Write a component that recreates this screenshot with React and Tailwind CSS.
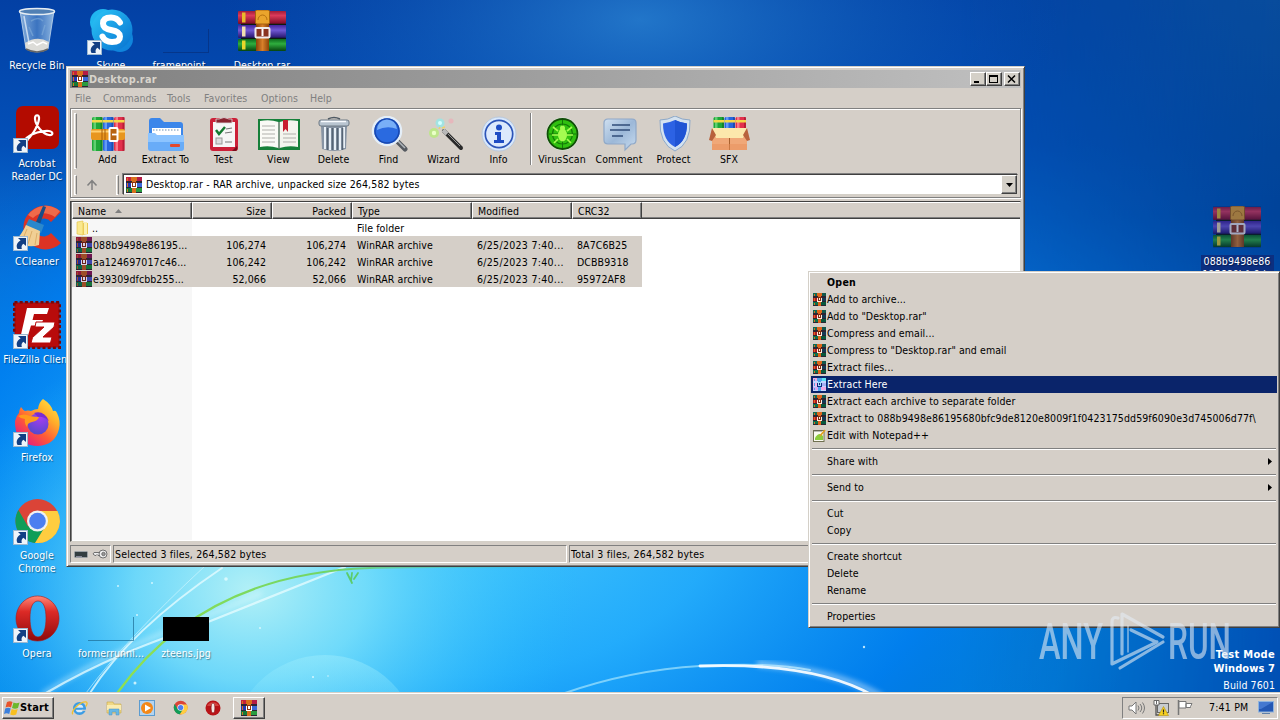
import React from "react";

const UI = "font-['DejaVu_Sans_Condensed','DejaVu_Sans',sans-serif] [font-stretch:condensed] text-[10.5px] leading-[13px] tracking-[.09px] whitespace-nowrap";
const RAISED = "border border-t-white border-l-white border-r-[#404040] border-b-[#404040] shadow-[inset_-1px_-1px_0_#808080]";
const SUNKEN = "border border-t-[#808080] border-l-[#808080] border-r-white border-b-white";

/* ---------- archive icons ---------- */

function Books({ className = "", dim = false }) {
  return (
    <svg viewBox="0 0 48 42" className={className}>
      <defs>
        <linearGradient id="bkR" x1="0" y1="0" x2="0" y2="1"><stop offset="0" stopColor="#a01c38" /><stop offset=".35" stopColor="#dc3a5a" /><stop offset="1" stopColor="#7a0a24" /></linearGradient>
        <linearGradient id="bkP" x1="0" y1="0" x2="0" y2="1"><stop offset="0" stopColor="#43259c" /><stop offset=".4" stopColor="#7058d4" /><stop offset="1" stopColor="#25146b" /></linearGradient>
        <linearGradient id="bkG" x1="0" y1="0" x2="0" y2="1"><stop offset="0" stopColor="#0d6a1c" /><stop offset=".4" stopColor="#2fae3e" /><stop offset="1" stopColor="#07440f" /></linearGradient>
        <linearGradient id="belt" x1="0" y1="0" x2="1" y2="0"><stop offset="0" stopColor="#8a4208" /><stop offset=".5" stopColor="#d8802a" /><stop offset="1" stopColor="#8a4208" /></linearGradient>
      </defs>
      <rect x="0" y="1" width="48" height="13" rx="1" fill="url(#bkR)" />
      <rect x="0" y="15" width="48" height="13" rx="1" fill="url(#bkP)" />
      <rect x="0" y="29" width="48" height="12" rx="1" fill="url(#bkG)" />
      <path d="M3 14.300h45M3 28.300h45" stroke="#0c1c10" strokeWidth="1.200" />
      <rect x="4" y="2.500" width="3.500" height="10" fill="#e8b92a" />
      <rect x="4" y="16.500" width="3.500" height="10" fill="#f0e0b0" />
      <rect x="4" y="30.500" width="3.500" height="9" fill="#e8d72a" />
      <rect x="18" y="1" width="13" height="40" fill="url(#belt)" />
      <rect x="17.500" y="0" width="14" height="14" rx="1.500" fill="#eaa42c" stroke="#a8620e" />
      <path d="M20 10a4.500 5 0 0 1 9 0" fill="none" stroke="#b5700f" />
      <rect x="17.500" y="18" width="14" height="9.500" rx="1" fill="#8a3420" stroke="#f0ecec" strokeWidth="2" />
      <rect x="23.500" y="19" width="2" height="7" fill="#fff" />
      {dim && <rect width="48" height="42" fill="#0a246a" opacity=".34" />}
    </svg>
  );
}

function Rar({ v = "a", className = "" }) {
  const p = {
    a: ["#c4203c", "#b41c46", "#2336b4", "#3a68d8", "#157a38", "#2a9c40", "#d8701c", "#8c3414", "#fff"],
    sel: ["#901838", "#6e1450", "#232c94", "#3c46ac", "#0d6446", "#16733a", "#9c4d28", "#6a2018", "#d8d4e4"],
    menu: ["#0f6a50", "#12584c", "#b01c20", "#143a54", "#0c7048", "#08583c", "#e0661a", "#7c2c14", "#ffe9dc"],
    hot: ["#f0a8d8", "#58e4f0", "#f6b6e4", "#a4b0f4", "#d4a8f0", "#f0a8e4", "#4ba4ec", "#a8dcfa", "#142a80"],
  }[v];
  return (
    <svg viewBox="0 0 16 16" shapeRendering="crispEdges" className={className}>
      <rect width="16" height="16" fill={v === "hot" ? "#c4d4ff" : "#2b2434"} />
      <path d="M0 0h6v4H0z" fill={p[0]} /><path d="M10 0h6v4h-6z" fill={p[1]} />
      <path d="M0 6h6v4H0z" fill={p[2]} /><path d="M10 6h6v4h-6z" fill={p[3]} />
      <path d="M0 11h6v4H0z" fill={p[4]} /><path d="M10 11h6v4h-6z" fill={p[5]} />
      <path d="M1 1h1v3H1zM1 6h1v4H1zM1 12h1v3H1z" fill={p[6]} />
      <path d="M6 0h4v16H6z" fill={p[6]} /><path d="M5 0h6v4H5z" fill={p[6]} /><path d="M5 5h6v6H5z" fill={p[7]} />
      <path d="M5 6h1v4H5zM10 6h1v4h-1zM5 10h6v1H5zM7 6h2v3H7z" fill={p[8]} />
    </svg>
  );
}

/* ---------- desktop icons ---------- */

const Shortcut = () => (
  <svg viewBox="0 0 15 15" className="absolute bottom-0 left-0 size-[15px]">
    <rect x=".5" y=".5" width="14" height="14" fill="#eef4fa" stroke="#9db8d0" />
    <path d="M5 2h8v8l-2.600-2.200C8.600 9 8.200 10.600 8.800 13H4.600C2.800 9.800 3.800 6.600 7.600 4.400z" fill="#123f84" />
  </svg>
);

const RecycleBin = () => (
  <svg viewBox="0 0 48 48" className="size-12">
    <defs><linearGradient id="bin" x1="0" x2="1"><stop offset="0" stopColor="#9cc0e4" stopOpacity=".85" /><stop offset=".5" stopColor="#4e84c8" stopOpacity=".75" /><stop offset="1" stopColor="#a8cbea" stopOpacity=".85" /></linearGradient></defs>
    <path d="M7 4l6 38q11 6 22 0l6-38z" fill="url(#bin)" stroke="#c3d8ec" strokeWidth=".8" />
    <path d="M12 36q12-8 24-1l-1 7q-11 6-22 0z" fill="#dcdcd8" />
    <path d="M13 42q11 6 22 0" stroke="#666" strokeWidth="1.500" fill="none" />
    <path d="M15 37l5-2 4 3 6-3 4 2" stroke="#fff" strokeWidth="1.500" fill="none" />
    <path d="M18 14q8-5 12 0M16 20l4 9M32 18l-3 10" stroke="#82add8" strokeWidth="1.500" fill="none" opacity=".6" />
    <ellipse cx="24" cy="4.500" rx="17.500" ry="3" fill="#5180b4" stroke="#e6edf2" strokeWidth="1.500" />
    <path d="M11 9l5 27" stroke="#eef5fc" strokeWidth="1.500" opacity=".7" />
  </svg>
);

const Skype = () => (
  <svg viewBox="0 0 48 48" className="size-12">
    <defs><linearGradient id="sky" x1="0" y1="0" x2="1" y2="1"><stop stopColor="#2cc8f8" /><stop offset="1" stopColor="#0870cf" /></linearGradient></defs>
    <circle cx="16" cy="15" r="13" fill="#21b6f0" /><circle cx="33" cy="32" r="13" fill="#1085dc" />
    <circle cx="25" cy="23" r="20.500" fill="url(#sky)" />
    <path d="M33 15.500q-3-5-9-5-8 0-8 6 0 5 8 6.500 9 1.500 9 6.500 0 5.500-8 5.500-7 0-9.500-5.500" fill="none" stroke="#fff" strokeWidth="6" strokeLinecap="round" />
  </svg>
);

const Acrobat = () => (
  <svg viewBox="0 0 48 48" className="size-12">
    <rect x="3" y="1" width="43" height="43" rx="7" fill="#b30b00" />
    <path d="M13 36C18 32 25 22 26 14c.6-5-4.400-5-4 0 .6 7 8 15 14 16 4.500.7 4.500-3.500 0-4-7-.6-17 2.500-22 6.500-4 3.400-3 6 1 2z" fill="none" stroke="#fff" strokeWidth="2.200" />
  </svg>
);

const CCleaner = () => (
  <svg viewBox="0 0 48 48" className="size-12">
    <path d="M48 9A22 22 0 1 0 48 40L38 30a9 9 0 1 1 0-11z" fill="#dd3324" />
    <path d="M47 8A22 22 0 0 0 15 12l5 3q9-9 22-1z" fill="#ef6a4a" />
    <path d="M30 3l3 1-6 17-4-2z" fill="#164e88" />
    <path d="M16 16l15 6-3 8-16-6z" fill="#2b88cc" />
    <path d="M13 22l14 6-1 14q-12 4-24-4 7-7 11-16z" fill="#f1cf94" />
    <path d="M14 26l-5 12M19 28l-4 13M24 30l-2 12" stroke="#dcae68" strokeWidth="1" />
  </svg>
);

const FileZilla = () => (
  <svg viewBox="0 0 48 48" className="size-12">
    <rect x="1.500" y="1.500" width="45" height="45" fill="#b50a0a" stroke="#780606" strokeWidth="3" strokeDasharray="3 2.200" />
    <rect x="2.500" y="2.500" width="43" height="43" fill="#b80b0b" />
    <path d="M14 7h22l-2 6H21l-1.500 6H30l-2 5.500H18L14 38H7z" fill="#fff" />
    <path d="M23 21h19l-1 5-11 10h9l-1.500 6H18l1.500-5.500L31 26h-9z" fill="#fff" stroke="#b80b0b" strokeWidth="1" />
  </svg>
);

const Firefox = () => (
  <svg viewBox="0 0 48 48" className="size-12">
    <defs>
      <linearGradient id="fx" x1="1" y1="0" x2=".2" y2="1"><stop stopColor="#fff04a" /><stop offset=".35" stopColor="#ffb02a" /><stop offset=".65" stopColor="#ff5a36" /><stop offset="1" stopColor="#e31587" /></linearGradient>
      <radialGradient id="fxb" cx=".6" cy=".2" r=".9"><stop stopColor="#a63cf0" /><stop offset="1" stopColor="#4b4bc8" /></radialGradient>
    </defs>
    <path d="M30 0q8 5 10 12 3-1 4 2 4 8 2 16-4 16-21 17Q8 47 3 32 0 20 6 14q0-3 2-6 2 3 4 4 3-1 6 0 4-2 7-2 1-7 5-10z" fill="url(#fx)" />
    <circle cx="25" cy="25" r="10.500" fill="url(#fxb)" />
    <path d="M5 17q6-3 12 0 5 1 9 1-1 4-7 5-5 1-5 5-3-4-2-8-4 0-7-3z" fill="#ff9a1c" />
    <path d="M21 14q10-3 15 8-6-5-11-4z" fill="#7a2cd0" />
  </svg>
);

function Chrome({ className = "size-12" }) {
  return (
    <svg viewBox="0 0 48 48" className={className}>
      <circle cx="24.500" cy="24" r="22" fill="#db4437" />
      <path d="M5.400 13A22 22 0 0 0 22 45.900L34 29.500 24.500 24 15 29.500z" fill="#0f9d58" />
      <path d="M24.500 14H44.500A22 22 0 0 1 22 45.900L33 28z" fill="#ffcd40" />
      <circle cx="24.500" cy="24" r="10.500" fill="#f1f1f1" /><circle cx="24.500" cy="24" r="8.300" fill="#4c7ef0" />
    </svg>
  );
}

function Opera({ className = "size-12" }) {
  return (
    <svg viewBox="0 0 48 48" className={className}>
      <defs><linearGradient id="op" x1="0" y1="0" x2="0" y2="1"><stop stopColor="#ff8878" /><stop offset=".35" stopColor="#dc2a26" /><stop offset="1" stopColor="#8e0a0c" /></linearGradient></defs>
      <path fillRule="evenodd" d="M24.500 1a21.500 22.500 0 1 0 .01 0zM25 6c6 0 8 8 8 17s-2 19-8 19-8-10-8-19 2-17 8-17z" fill="url(#op)" stroke="#a81818" strokeWidth=".6" />
    </svg>
  );
}

function DeskIcon({ pos, label, shortcut = true, labelClass = "", children }) {
  return (
    <div className={`absolute flex w-[74px] flex-col items-center ${pos}`}>
      <div className="relative flex size-12 items-center justify-center">
        {children}
        {shortcut && <Shortcut />}
      </div>
      <div className={`mt-1 text-center text-white [text-shadow:1px_1px_1px_#0006] ${UI} ${labelClass}`}>
        {label.map((l) => <div key={l}>{l}</div>)}
      </div>
    </div>
  );
}

function Wallpaper() {
  return (
    <svg viewBox="0 0 1280 720" className="absolute inset-0 h-[720px] w-[1280px]">
      <defs>
        <linearGradient id="wl" x1="0" y1="0" x2="0" y2="1">
          <stop offset="0" stopColor="#0340a4" /><stop offset=".2" stopColor="#0350b8" /><stop offset=".38" stopColor="#0876dc" />
          <stop offset=".55" stopColor="#0496f0" /><stop offset=".8" stopColor="#08aaf6" /><stop offset="1" stopColor="#029cf4" />
        </linearGradient>
        <linearGradient id="wr" x1="0" y1="0" x2="0" y2="1">
          <stop offset="0" stopColor="#0c4c94" /><stop offset=".3" stopColor="#003f90" /><stop offset=".6" stopColor="#0058c0" /><stop offset="1" stopColor="#0050b4" />
        </linearGradient>
        <linearGradient id="mk"><stop offset=".75" stopColor="#000" /><stop offset="1" stopColor="#fff" /></linearGradient>
        <mask id="rm"><rect width="1280" height="720" fill="url(#mk)" /></mask>
        <radialGradient id="g1" gradientUnits="userSpaceOnUse" cx="0" cy="0" r="1" gradientTransform="translate(460 500) scale(660 440)">
          <stop offset="0" stopColor="#48c8fc" /><stop offset=".4" stopColor="#24acfc" stopOpacity=".95" /><stop offset=".75" stopColor="#007cf0" stopOpacity=".8" /><stop offset="1" stopColor="#0060cc" stopOpacity="0" />
        </radialGradient>
        <radialGradient id="g2" gradientUnits="userSpaceOnUse" cx="0" cy="0" r="1" gradientTransform="translate(250 590) scale(330 260)">
          <stop offset="0" stopColor="#b2f0f6" /><stop offset=".35" stopColor="#7ce2fa" stopOpacity=".85" /><stop offset="1" stopColor="#20c0fc" stopOpacity="0" />
        </radialGradient>
        <radialGradient id="g3" gradientUnits="userSpaceOnUse" cx="0" cy="0" r="1" gradientTransform="translate(640 20) scale(420 200)">
          <stop offset="0" stopColor="#2c86d4" stopOpacity=".75" /><stop offset="1" stopColor="#0c58b8" stopOpacity="0" />
        </radialGradient>
        <linearGradient id="orb" x1="0" y1="0" x2="0" y2="1"><stop stopColor="#9cecfc" stopOpacity=".5" /><stop offset=".5" stopColor="#5cd8fc" stopOpacity=".1" /></linearGradient>
        <linearGradient id="grn"><stop stopColor="#90e050" /><stop offset=".5" stopColor="#70d468" /><stop offset="1" stopColor="#40b8c8" stopOpacity="0" /></linearGradient>
        <filter id="soft"><feGaussianBlur stdDeviation="2.500" /></filter>
      </defs>
      <rect width="1280" height="720" fill="url(#wl)" />
      <rect width="1280" height="720" fill="url(#wr)" mask="url(#rm)" />
      <rect x="640" width="640" height="720" fill="#004cb0" opacity=".3" />
      <rect width="1280" height="720" fill="url(#g3)" />
      <rect width="1280" height="720" fill="url(#g1)" />
      <rect width="1280" height="720" fill="url(#g2)" />
      <circle cx="325" cy="749" r="94" fill="url(#orb)" />
      <g fill="none" strokeLinecap="round">
        <path d="M44 693C120 645 180 628 260 594" stroke="#dffaff" strokeWidth="5" opacity=".4" filter="url(#soft)" />
        <path d="M46 693C110 655 170 636 208 622T345 567" stroke="#e8fcff" strokeWidth="2.200" opacity=".75" />
        <path d="M90 693Q130 630 222 568" stroke="#e4fbff" strokeWidth="2" opacity=".8" />
        <path d="M86 693Q125 640 205 566" stroke="#d8f8ff" strokeWidth="1" opacity=".6" />
        <path d="M118 692C170 620 250 572 370 568Q420 566 560 568" stroke="url(#grn)" strokeWidth="2.200" />
        <path d="M347 573l5 10M352 573l-1 8M358 573l-4 6" stroke="#5ccc6c" strokeWidth="1.800" />
        <path d="M562 694Q630 670 700 666T810 670" stroke="#9ce0fc" strokeWidth="2" opacity=".75" />
        <path d="M760 664Q840 672 880 696" stroke="#fff" strokeWidth="7" opacity=".4" filter="url(#soft)" />
        <path d="M700 666Q815 662 874 696" stroke="#fff" strokeWidth="2.800" opacity=".9" />
      </g>
      <g fill="#e8fdff" opacity=".8">
        <circle cx="226" cy="579" r="1.800" /><circle cx="118" cy="586" r="1" /><circle cx="152" cy="583" r="1" /><circle cx="137" cy="615" r="1" /><circle cx="135" cy="683" r="1.500" />
        <circle cx="313" cy="677" r="1" /><circle cx="328" cy="676" r=".8" /><circle cx="260" cy="628" r="1" /><circle cx="864" cy="647" r="1.200" />
      </g>
    </svg>
  );
}

/* ---------- toolbar icons ---------- */

const TI = "h-[36px] w-[42px]";
const BookCols = ({ h = 34, y = 1 }) => (
  <g>
    {[["#1fa838", "#7ce08a", "#0e6e20"], ["#2766dc", "#7fb2ff", "#123c98"], ["#e2304c", "#ff9aa4", "#a01028"]].map(([c, l, d], i) => (
      <g key={c}>
        <rect x={5 + i * 11} y={y} width="10.500" height={h} rx="1.500" fill={c} />
        <rect x={6.500 + i * 11} y={y} width="2.500" height={h} fill={l} opacity=".7" />
        <rect x={13.500 + i * 11} y={y} width="2" height={h} fill={d} opacity=".6" />
        <rect x={5 + i * 11} y={y + 3} width="10.500" height="2.500" fill="#f4d848" />
      </g>
    ))}
  </g>
);

const icons = {
  Add: (
    <svg viewBox="0 0 42 36" className={TI}>
      <BookCols />
      <rect x="4" y="13" width="34" height="11" rx="2" fill="#e8961e" />
      <path d="M4 15.500h34" stroke="#ffd070" strokeWidth="2" /><path d="M15 13v11M18 13v11" stroke="#a85c08" />
      <rect x="22.500" y="12" width="8" height="13" rx="1" fill="#b86410" stroke="#fff" strokeWidth="2" />
      <path d="M25 18.500h6" stroke="#fff" strokeWidth="1.800" />
    </svg>
  ),
  "Extract To": (
    <svg viewBox="0 0 42 36" className={TI}>
      <path d="M4 5q0-3 3-3h8l4 4h16q3 0 3 3v18H4z" fill="#3b86ea" />
      <path d="M7 12h29v9H7z" fill="#fff" /><path d="M8 14h27" stroke="#9ab4cc" strokeWidth="1.500" strokeDasharray="1.500 1.500" />
      <path d="M3 17h7l2 2h27v13q0 3-3 3H6q-3 0-3-3z" fill="#8cc4ff" /><path d="M3 26h36v6q0 3-3 3H6q-3 0-3-3z" fill="#68acf8" />
      <rect x="25" y="28" width="10" height="3" rx="1" fill="#e4482c" />
    </svg>
  ),
  Test: (
    <svg viewBox="0 0 42 36" className={TI}>
      <rect x="7" y="2" width="28" height="33" rx="3" fill="#cc2038" /><rect x="10" y="6" width="22" height="25" fill="#f6f6f6" />
      <path d="M13 7V3h3q5-3 10 0h3v4z" fill="#8a2430" stroke="#e0e0e0" strokeWidth=".8" />
      <path d="M13 14l3 4 6-7" fill="none" stroke="#147a30" strokeWidth="2.500" />
      <path d="M23 13l6-1M22 17l7-1M22 26h7" stroke="#777" strokeWidth="1.200" /><rect x="13" y="22" width="6" height="6" fill="#ddd" stroke="#999" />
      <path d="M34 30l-5 5h4q2-1 1-5z" fill="#7c0c1c" />
    </svg>
  ),
  View: (
    <svg viewBox="0 0 42 36" className={TI}>
      <path d="M0 3h42v31H0z" fill="#16803a" /><path d="M2 5q10-2 18.500 1v26Q11 29 2 31z" fill="#fafaf6" /><path d="M40 5q-10-2-18.500 1v26q9.500-3 18.500-1z" fill="#f4f4ee" />
      <path d="M20.500 6h1v27h-1z" fill="#777" />
      <path d="M4 10h13M4 14h13M4 18h13M4 22h13M4 26h13M25 18h13M25 22h13M25 26h13" stroke="#b0b0ac" />
      <path d="M25 4h5v12l-2.500-3-2.500 3z" fill="#c81c30" />
    </svg>
  ),
  Delete: (
    <svg viewBox="0 0 42 36" className={TI}>
      <path d="M8 10h26l-1 23q-12 4-24 0z" fill="#8794a4" />
      <path d="M12 11v22M17 12v22M22 12v22M27 12v22M31 11v21" stroke="#e8eff6" strokeWidth="2" /><path d="M14.500 12v22M19.500 12v22M24.500 12v22M29.500 12v22" stroke="#566474" strokeWidth="1.500" />
      <rect x="6" y="4" width="30" height="6" rx="2" fill="#b8c4d0" stroke="#6c7884" /><path d="M15 3q6-3 12 0" fill="none" stroke="#505a64" strokeWidth="1.500" />
      <path d="M8 5.500h25" stroke="#f8fbff" strokeWidth="1.500" />
    </svg>
  ),
  Find: (
    <svg viewBox="0 0 42 36" className={TI}>
      <path d="M27 23l10 10" stroke="#555a60" strokeWidth="5" strokeLinecap="round" /><path d="M28 23l9 9" stroke="#b0b6bc" strokeWidth="1.500" />
      <circle cx="19" cy="15" r="14" fill="#2a6ae0" stroke="#e4eef8" strokeWidth="2.500" /><circle cx="19" cy="15" r="12" fill="none" stroke="#1848b0" strokeWidth="1.500" />
      <path d="M9 14a10 10 0 0 1 20-1q-10-4-20 1z" fill="#8cc0fc" opacity=".8" />
    </svg>
  ),
  Wizard: (
    <svg viewBox="0 0 42 36" className={TI}>
      <path d="M21 15l17 17" stroke="#2a2a2a" strokeWidth="4" strokeLinecap="round" /><path d="M20 14l4 4" stroke="#b8b8b8" strokeWidth="4" /><path d="M25 18l12 12" stroke="#999" strokeWidth="1" />
      <circle cx="17" cy="7" r="4.500" fill="#80f0f4" opacity=".6" /><circle cx="17" cy="7" r="2" fill="#d4ffff" />
      <circle cx="11" cy="17" r="5" fill="#b4f070" opacity=".7" /><circle cx="11" cy="17" r="2.200" fill="#eaffc8" />
      <circle cx="28" cy="5" r="2.500" fill="#f8a0b0" opacity=".5" /><path d="M19 12l3-1M16 13l1-2" stroke="#ecd46c" strokeWidth="1.500" />
    </svg>
  ),
  Info: (
    <svg viewBox="0 0 42 36" className={TI}>
      <circle cx="21" cy="18" r="17" fill="#d8e8fc" stroke="#b8c8dc" /><circle cx="21" cy="18" r="13.700" fill="#dce9fc" stroke="#2c54b8" strokeWidth="1.700" />
      <circle cx="21" cy="11.500" r="3" fill="#1e4cc4" /><path d="M17 16h6v8h3v3H16v-3h3v-5h-2z" fill="#1e4cc4" />
    </svg>
  ),
  VirusScan: (
    <svg viewBox="0 0 42 36" className={TI}>
      <circle cx="21.500" cy="18" r="16.500" fill="#dce4d8" /><circle cx="21.500" cy="18" r="15" fill="#30c010" stroke="#124e08" strokeWidth="1.800" />
      <circle cx="21.500" cy="18" r="10" fill="none" stroke="#147808" strokeWidth="1.200" /><path d="M21.500 4v28M7.500 18h28" stroke="#147808" />
      <ellipse cx="21.500" cy="19" rx="4.500" ry="6.500" fill="#a4fc50" /><circle cx="21.500" cy="12" r="2.500" fill="#a4fc50" />
      <path d="M17 15l-5-4M26 15l5-4M17 19h-6M26 19h6M17 23l-4 4M26 23l4 4" stroke="#a4fc50" strokeWidth="1.700" />
    </svg>
  ),
  Comment: (
    <svg viewBox="0 0 42 36" className={TI}>
      <defs><linearGradient id="cm" x1="0" y1="0" x2="1" y2="1"><stop stopColor="#d0e0f0" /><stop offset=".5" stopColor="#9cb8d8" /><stop offset="1" stopColor="#c8dcf0" /></linearGradient></defs>
      <path d="M10 3h24q4 0 4 4v17q0 4-4 4h-1l-6 6v-6H10q-4 0-4-4V7q0-4 4-4z" fill="url(#cm)" stroke="#8fa8c8" strokeWidth="1.200" />
      <path d="M14 9h18M12 14h20M14 20h11" stroke="#304c78" strokeWidth="1.500" />
    </svg>
  ),
  Protect: (
    <svg viewBox="0 0 42 36" className={TI}>
      <path d="M22 0q7 4 15 4 1 24-15 31Q6 28 7 4q8 0 15-4z" fill="#d4e2f0" stroke="#8ca8c8" />
      <path d="M22 4q6 3 12 3.500Q34 25 22 31 10 25 10 7.500 16 7 22 4z" fill="#2c62e4" /><path d="M22 4q6 3 12 3.500Q34 25 22 31z" fill="#1f54d4" />
    </svg>
  ),
  SFX: (
    <svg viewBox="0 0 42 36" className={TI}>
      <g transform="translate(.5 0)"><BookCols h={16} y={1} /></g>
      <path d="M4 14h35v20H4z" fill="#f0a878" /><path d="M21 20h1v14h-1z" fill="#a8602c" /><path d="M4 28h35v6H4z" fill="#e8905c" opacity=".5" />
      <path d="M4 12h35l-4 10H8z" fill="#fce8ac" /><path d="M4 12L1 24l3 1 4-6zM39 12l3 12-3 1-4-6z" fill="#b8623c" />
    </svg>
  ),
};

const tools = [
  ["Add", "w-[55px]"], ["Extract To", "w-[61px]"], ["Test", "w-[55px]"], ["View", "w-[55px]"], ["Delete", "w-[55px]"], ["Find", "w-[55px]"],
  ["Wizard", "w-[55px]"], ["Info", "w-[55px]"], null, ["VirusScan", "w-[60px]"], ["Comment", "w-[54px]"], ["Protect", "w-[55px]"], ["SFX", "w-[56px]"],
];

/* ---------- WinRAR window ---------- */

const Grip = ({ className = "" }) => <div className={`w-[3px] shrink-0 border-y border-l border-r border-y-white border-l-white border-r-[#808080] ${className}`} />;

function TitleButton({ children, className = "" }) {
  return (
    <div className={`flex h-[14px] w-4 items-center justify-center bg-[#d4d0c8] ${RAISED} ${className}`}>
      <svg viewBox="0 0 12 10" className="h-[10px] w-3" shapeRendering="crispEdges" fill="none" stroke="#000">{children}</svg>
    </div>
  );
}

const cols = [
  ["Name", "w-[120px] pl-[5px]"], ["Size", "w-20 justify-end pr-[5px]"], ["Packed", "w-20 justify-end pr-[5px]"],
  ["Type", "w-[120px] pl-[5px]"], ["Modified", "w-[100px] pl-[5px]"], ["CRC32", "w-[70px] pl-[5px]"],
];
const files = [
  ["088b9498e86195...", "106,274", "106,274", "8A7C6B25"],
  ["aa124697017c46...", "106,242", "106,242", "DCBB9318"],
  ["e39309dfcbb255...", "52,066", "52,066", "95972AF8"],
];

function WinRar() {
  return (
    <div className="absolute top-[66px] left-[66px] flex h-[501px] w-[959px] flex-col border border-t-[#d4d0c8] border-l-[#d4d0c8] border-r-[#404040] border-b-[#404040] bg-[#d5cfc8] p-[3px] shadow-[inset_1px_1px_0_#fff,inset_-1px_-1px_0_#808080]">
      <div className="flex h-[18px] items-center bg-linear-to-r from-[#808080] to-[#c0c0c0] pr-px pl-[2px]">
        <Rar className="size-4" />
        <span className={`ml-px flex-1 font-bold text-[#d8d4cc] ${UI} text-[10.8px]! tracking-[.25px]!`}>Desktop.rar</span>
        <TitleButton><path d="M2 7h5M2 8h5" /></TitleButton>
        <TitleButton><path d="M1.500 1.500h8v7h-8zM1 2.500h9" /></TitleButton>
        <TitleButton className="ml-[2px]"><path d="M2 1.500l7 7M9 1.500l-7 7" strokeWidth="1.500" shapeRendering="auto" /></TitleButton>
      </div>
      <div className={`flex h-5 items-center text-[#808080] ${UI}`}>
        <span className="w-[28px] pl-[5px]">File</span><span className="ml-[5px] w-16 tracking-normal">Commands</span><span className="w-[37px]">Tools</span>
        <span className="w-[57px]">Favorites</span><span className="w-[49px]">Options</span><span>Help</span>
      </div>

      <div className="flex h-[90px] flex-col border border-[#808080] shadow-[inset_1px_1px_0_#fff,1px_1px_0_#fff]">
        <div className="flex h-[63px] pt-[4px] pl-[3px]">
          <Grip className="mr-[3px] h-[56px]" />
          {tools.map((t, i) =>
            t ? (
              <div key={t[0]} className={`flex shrink-0 flex-col items-center pt-[3px] ${t[1]}`}>
                {icons[t[0]]}
                <span className={`mt-px ${UI}`}>{t[0]}</span>
              </div>
            ) : (
              <div key={i} className="mr-px ml-[4px] h-[52px] w-px shrink-0 bg-[#808080] shadow-[1px_0_0_#fff]" />
            )
          )}
        </div>
        <div className="flex h-[24px] items-center pt-px pr-[2px] pl-[3px]">
          <Grip className="h-[20px]" />
          <svg viewBox="0 0 12 12" className="ml-[9px] size-3" fill="none" stroke="#808080" strokeWidth="1.500"><path d="M6 11V2M1.500 6.500L6 1.700l4.500 4.800" /></svg>
          <Grip className="ml-[18px] h-[20px]" />
          <div className="ml-[4px] flex h-[21px] flex-1 items-center border border-t-[#404040] border-l-[#404040] border-r-[#d4d0c8] border-b-[#d4d0c8] bg-white pl-[2px] shadow-[-1px_-1px_0_#808080]">
            <Rar className="size-4" />
            <span className={`ml-[4px] flex-1 ${UI} tracking-[.14px]!`}>Desktop.rar - RAR archive, unpacked size 264,582 bytes</span>
            <div className={`flex h-[19px] w-4 items-center justify-center bg-[#d4d0c8] ${RAISED}`}>
              <svg viewBox="0 0 7 4" className="h-1 w-[7px]"><path d="M0 0h7L3.500 4z" /></svg>
            </div>
          </div>
        </div>
      </div>

      <div className="mt-[3px] flex h-[341px] flex-col border border-t-[#404040] border-l-[#404040] border-r-[#d4d0c8] border-b-[#d4d0c8] bg-[linear-gradient(90deg,#f7f7f7_121px,#fff_121px)] pl-px shadow-[inset_1px_0_0_#808080,inset_-1px_-1px_0_#fff]">
        <div className={`flex h-[17px] shrink-0 bg-[#d5cfc8] ${UI}`}>
          {cols.map(([c, k]) => (
            <div key={c} className={`flex shrink-0 items-center pt-px ${RAISED} ${k}`}>
              {c}
              {c === "Name" && <svg viewBox="0 0 7 4" className="ml-[9px] h-1 w-[7px]"><path d="M3.500 0L7 4H0z" fill="#808080" /></svg>}
            </div>
          ))}
          <div className="flex-1 border-y border-t-white border-b-[#404040] shadow-[inset_0_-1px_0_#808080]" />
        </div>
        <div className={`flex h-[17px] shrink-0 items-center pt-px ${UI}`}>
          <div className="flex w-[120px] items-center pl-[3px]">
            <svg viewBox="0 0 16 16" className="mr-px size-4"><path d="M2 2l6-1v14l-6-1z" fill="#fae88c" stroke="#e0c040" strokeWidth=".6" /><path d="M8 3h5v11l-5 1z" fill="#eccb58" /><path d="M9 2h3v12H9z" fill="#fbf0b0" /></svg>
            ..
          </div>
          <div className="w-40" /><div className="pl-[5px]">File folder</div>
        </div>
        {files.map(([n, s, p, crc]) => (
          <div key={n} className={`flex h-[17px] w-[570px] shrink-0 items-center bg-[#d5cfc8] pt-px ${UI}`}>
            <div className="flex w-[120px] items-center pl-1"><Rar v="sel" className="mr-px size-4" />{n}</div>
            <div className="w-20 pr-[6px] text-right">{s}</div>
            <div className="w-20 pr-[6px] text-right">{p}</div>
            <div className="w-[120px] pl-[5px]">WinRAR archive</div>
            <div className="w-[100px] pl-[5px] tracking-[.3px]">6/25/2023 7:40...</div>
            <div className="w-[70px] pl-[5px]">{crc}</div>
          </div>
        ))}
      </div>

      <div className={`mt-[3px] flex h-[18px] shrink-0 gap-[2px] ${UI}`}>
        <div className={`flex w-[41px] items-center gap-1 pl-[3px] ${SUNKEN}`}>
          <svg viewBox="0 0 14 7" className="h-[7px] w-[14px]"><rect x=".5" y=".5" width="13" height="6" rx="1" fill="#333d40" stroke="#9aa0a4" /><path d="M2 5.500h6" stroke="#889" /></svg>
          <svg viewBox="0 0 16 10" className="h-[10px] w-4" fill="none" stroke="#707070"><path d="M10 3.500H2l-1 1.500 2 1.500h1l1-1 1 1h4z" fill="#eee" /><circle cx="11" cy="5" r="4" fill="#eee" /><circle cx="11.500" cy="5" r="1.700" fill="#999" /></svg>
        </div>
        <div className={`flex w-[454px] items-center pl-px ${SUNKEN}`}><span className="tracking-[.16px]">Selected 3 files, 264,582 bytes</span></div>
        <div className={`flex flex-1 items-center pl-px ${SUNKEN}`}><span className="tracking-[.22px]">Total 3 files, 264,582 bytes</span></div>
      </div>
    </div>
  );
}

/* ---------- context menu ---------- */

const menu = [
  ["Open", "bold"], ["Add to archive...", "rar"], ['Add to "Desktop.rar"', "rar"], ["Compress and email...", "rar"],
  ['Compress to "Desktop.rar" and email', "rar"], ["Extract files...", "rar"], ["Extract Here", "hot"], ["Extract each archive to separate folder", "rar"],
  ["Extract to 088b9498e86195680bfc9de8120e8009f1f0423175dd59f6090e3d745006d77f\\", "rar"], ["Edit with Notepad++", "npp"], null,
  ["Share with", "sub"], null, ["Send to", "sub"], null, ["Cut"], ["Copy"], null, ["Create shortcut"], ["Delete"], ["Rename"], null, ["Properties"],
];

function ContextMenu() {
  return (
    <div className={`absolute top-[271px] left-[808px] flex w-[472px] flex-col border border-t-[#d4d0c8] border-l-[#d4d0c8] border-r-[#404040] border-b-[#404040] bg-[#d5cfc8] p-[2px] shadow-[inset_1px_1px_0_#fff,inset_-1px_-1px_0_#808080] ${UI}`}>
      {menu.map((m, i) =>
        m ? (
          <div key={m[0]} className={`flex h-[17px] items-center pr-[5px] pl-[2px] ${m[1] === "hot" ? "bg-[#0a246a] text-white" : ""} ${m[1] === "bold" ? "font-bold tracking-[.3px]" : ""}`}>
            <div className="mr-px w-[13px]">
              {m[1] === "rar" && <Rar v="menu" className="size-[13px]" />}
              {m[1] === "hot" && <Rar v="hot" className="size-[13px]" />}
              {m[1] === "npp" && (
                <svg viewBox="0 0 13 13" className="size-[13px]"><rect x=".5" y="1.500" width="10.500" height="11" fill="#fafaf0" stroke="#707050" /><path d="M2 9q4-7 8-2v4H2z" fill="#8ccc3c" /><path d="M7 7l5-6" stroke="#e0a020" strokeWidth="1.800" /><path d="M2 1v2M4 1v2M6 1v2M8 1v2" stroke="#555" strokeWidth=".8" /></svg>
              )}
            </div>
            <span className="flex-1">{m[0]}</span>
            {m[1] === "sub" && <svg viewBox="0 0 4 7" className="h-[7px] w-1"><path d="M0 0l4 3.500L0 7z" /></svg>}
          </div>
        ) : (
          <div key={i} className="flex h-[9px] items-center px-px"><div className="h-[2px] w-full border-t border-b border-t-[#808080] border-b-white" /></div>
        )
      )}
    </div>
  );
}

/* ---------- taskbar ---------- */

function Taskbar() {
  return (
    <div className={`absolute top-[692px] left-0 flex h-7 w-[1280px] items-center border-t border-[#d4d0c8] bg-[#d5cfc8] pt-[2px] pr-[2px] pl-[2px] shadow-[inset_0_1px_0_#fff] ${UI}`}>
      <div className={`flex h-[22px] w-[52px] items-center pl-px ${RAISED}`}>
        <svg viewBox="0 0 16 16" className="size-4">
          <path d="M3 2q3-1.500 5.500 0L7 7.500Q4.500 6 1.500 7.500z" fill="#e8542c" /><path d="M9.500 2.500q3 1.500 6 0L14 8q-3 1.500-6 0z" fill="#6cb82c" />
          <path d="M1.200 8.500q3-1.500 5.500 0L5.200 14Q2.500 12.500 0 14z" fill="#3c80dc" /><path d="M7.700 9q3 1.500 6 0l-1.500 5.500q-3 1.500-6 0z" fill="#f8c020" />
        </svg>
        <span className="text-[11px] font-bold tracking-[.15px]">Start</span>
      </div>
      <div className="ml-[17px] flex items-center gap-[17.500px]">
        <svg viewBox="0 0 18 16" className="h-4 w-[17px]"><circle cx="9" cy="8.500" r="5.500" fill="#d8ecfa" stroke="#3c9ce4" strokeWidth="2.800" /><path d="M4 8.800h11" stroke="#3c9ce4" strokeWidth="2.200" /><path d="M11.500 11h5v-1.200h-5z" fill="#d5cfc8" /><path d="M2 14.500C-1 12 9 1 16 1.500c2 .5.500 4-.5 5" fill="none" stroke="#f0c030" strokeWidth="1.400" /></svg>
        <svg viewBox="0 0 16 16" className="size-4"><path d="M1 2h6l1 2h7v9H1z" fill="#f0d884" stroke="#c8a848" strokeWidth=".6" /><path d="M1 5h14v5H1z" fill="#fbecb0" /><path d="M3 15V9h10v6h-3v-3H6v3z" fill="#68b8e4" stroke="#4c90c0" strokeWidth=".5" /></svg>
        <svg viewBox="0 0 16 16" className="size-4"><rect x=".5" y=".5" width="15" height="15" fill="#b4d4f0" stroke="#5c9cd0" /><circle cx="8" cy="8" r="6" fill="#f48818" /><path d="M6 4.500l6 3.500-6 3.500z" fill="#fff" /></svg>
        <Chrome className="size-[15px]" />
        <svg viewBox="0 0 16 16" className="size-4"><circle cx="8" cy="8" r="7.500" fill="#b81418" /><path d="M2 6a6.500 6 0 0 1 12 0z" fill="#e46058" opacity=".6" /><ellipse cx="8" cy="8" rx="1.900" ry="5" fill="#f4e8e4" stroke="#801014" strokeWidth=".6" /></svg>
      </div>
      <div className={`ml-[12px] flex h-[22px] w-8 items-center justify-center ${RAISED}`}><Rar className="size-4" /></div>
      <div className={`ml-auto flex h-[22px] w-[156px] items-center pl-[5px] ${SUNKEN}`}>
        <svg viewBox="0 0 17 14" className="h-[14px] w-[17px]" fill="none" stroke="#777"><path d="M1 5h3l4-4v12L4 9H1z" fill="#fff" /><path d="M10 4.500q2 2.500 0 5M12 3q3.500 4 0 8M14.500 1.500q4 5.500 0 11" /></svg>
        <svg viewBox="0 0 16 16" className="ml-2 size-4"><rect x="4.500" y="3.500" width="11" height="9" fill="#c8ccd0" stroke="#666" /><path d="M3 5v10h3" fill="none" stroke="#555" strokeWidth="1.300" /><path d="M1 .5h5v4.500H1z" fill="#fff" stroke="#666" /><path d="M3.500 1v3" stroke="#666" /><path d="M10.500 6.500l5 9h-10z" fill="#f8d020" stroke="#b09010" strokeWidth=".6" /><path d="M10.500 9.500v3M10.500 13.200v1" stroke="#222" strokeWidth="1.200" /></svg>
        <svg viewBox="0 0 16 15" className="ml-2 h-[15px] w-4" stroke="#777"><path d="M1.500 0v15" strokeWidth="1.500" /><path d="M2 1.500h7v6.500H2zM9 3.500h6l-1.500 3 0 1H9z" fill="#fff" /></svg>
        <span className="ml-4 tracking-[.2px]">7:41 PM</span>
        <svg viewBox="0 0 16 14" className="ml-[10px] h-[14px] w-4"><rect x=".5" y=".5" width="15" height="10.500" fill="#2458b4" stroke="#90b4dc" /><path d="M1 1h14L3 8H1z" fill="#4478d0" /><path d="M4 12.500h8" stroke="#6080a8" /></svg>
      </div>
    </div>
  );
}

export default function App() {
  return (
    <div className="relative h-[720px] w-[1280px] overflow-hidden bg-[#0350b8] text-black">
      <Wallpaper />
      <DeskIcon pos="top-[7px] left-0" label={["Recycle Bin"]} shortcut={false}><RecycleBin /></DeskIcon>
      <DeskIcon pos="top-[7px] left-[74px]" label={["Skype"]}><Skype /></DeskIcon>
      <DeskIcon pos="top-[7px] left-[149px]" label={["framepoint"]} labelClass="pr-[14px]" shortcut={false}><div className="mt-[20px] h-[24px] w-[46px] border-r border-b border-[#062c74]/60" /></DeskIcon>
      <DeskIcon pos="top-[7px] left-[225px]" label={["Desktop.rar"]} shortcut={false}><Books className="h-[42px] w-12" /></DeskIcon>
      <DeskIcon pos="top-[105px] left-0" label={["Acrobat", "Reader DC"]}><Acrobat /></DeskIcon>
      <DeskIcon pos="top-[203px] left-0" label={["CCleaner"]}><CCleaner /></DeskIcon>
      <DeskIcon pos="top-[301px] left-0" label={["FileZilla Client"]}><FileZilla /></DeskIcon>
      <DeskIcon pos="top-[399px] left-0" label={["Firefox"]}><Firefox /></DeskIcon>
      <DeskIcon pos="top-[497px] left-0" label={["Google", "Chrome"]}><Chrome /></DeskIcon>
      <DeskIcon pos="top-[595px] left-0" label={["Opera"]}><Opera /></DeskIcon>
      <DeskIcon pos="top-[595px] left-[74px]" label={["formerrunni..."]} shortcut={false}><div className="mt-[20px] h-[24px] w-[46px] border-r border-b border-[#1c6c94]/70" /></DeskIcon>
      <DeskIcon pos="top-[595px] left-[149px]" label={["zteens.jpg"]} shortcut={false}><div className="mt-[20px] h-[24px] w-[46px] bg-black" /></DeskIcon>
      <DeskIcon pos="top-[203px] left-[1200px]" label={["088b9498e86", "195680bfc9de"]} shortcut={false} labelClass="w-[73px] bg-[#0c2f80]"><Books dim className="h-[42px] w-12" /></DeskIcon>

      <WinRar />
      <ContextMenu />

      <div className="absolute top-[648px] left-[1180px] flex w-[95px] flex-col items-end text-white font-bold">
        <span className={`${UI} text-[11px]! leading-[14px]! tracking-[.3px]!`}>Test Mode</span>
        <span className={`${UI} text-[11px]! leading-[14px]! tracking-[.1px]!`}>Windows 7</span>
        <span className={`mt-[3px] font-normal ${UI}`}>Build 7601</span>
      </div>
      <svg viewBox="0 0 212 66" className="absolute top-[608px] left-[1036px] h-[66px] w-[212px]" opacity=".6">
        <g fill="#dfe8f2" fontFamily="Roboto, sans-serif" fontWeight="500" fontSize="50">
          <text x="3" y="51" textLength="64" lengthAdjust="spacingAndGlyphs">ANY</text>
          <text x="132" y="51" textLength="63" lengthAdjust="spacingAndGlyphs">RUN</text>
        </g>
        <g fill="none" stroke="#e4ecf4" strokeWidth="3.200" strokeLinecap="round" strokeLinejoin="round">
          <path d="M82 10q-6-2-6 4v42l45-22" /><path d="M86 46V6l41 23" /><path d="M92 18v26" strokeWidth="1.500" /><path d="M95 22l25 12" /><path d="M127 34L84 60" />
        </g>
      </svg>

      <Taskbar />
    </div>
  );
}
